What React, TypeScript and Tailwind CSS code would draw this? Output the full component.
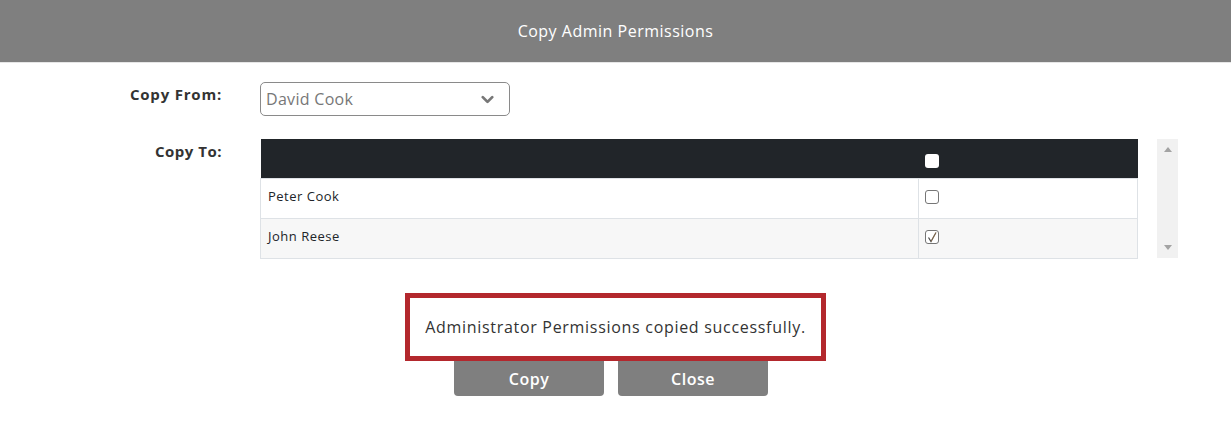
import React from 'react';
import { ChevronDown } from 'lucide-react';

const font = { fontFamily: '"Open Sans", "Liberation Sans", sans-serif' };

const users = [
    { name: 'Peter Cook', checked: false },
    { name: 'John Reese', checked: true },
];

const CheckBox: React.FC<{ checked: boolean }> = ({ checked }) => (
    <span className="relative inline-block w-[14px] h-[14px] rounded-[3px] border border-[#767676] bg-white">
        {checked && (
            <svg viewBox="0 0 14 14" className="absolute -left-px -top-px w-[14px] h-[14px]">
                <path d="M3.5 7.5 L6 11.5 L11 2.5" fill="none" stroke="#4a4a4a" strokeWidth="1.2" />
                <path d="M6 11.5 L11 2.5" fill="none" stroke="#d08a3a" strokeWidth="0.6" opacity="0.7" />
            </svg>
        )}
    </span>
);

const App: React.FC = () => {
    return (
        <div className="min-h-[434px] bg-white text-[#333]" style={font}>
            <header className="h-[63px] bg-[#7f7f7f] border-b border-[#e6e6e6] flex items-center justify-center">
                <h1 className="text-[16px] font-medium text-white tracking-[0.5px]">Copy Admin Permissions</h1>
            </header>

            <div className="pt-[19px]">
                <div className="flex items-start">
                    <label className="w-[222px] text-right text-[15px] font-bold text-[#333] pt-[1px] tracking-[0.8px]">Copy From:</label>
                    <div className="ml-[38px] w-[250px] h-[34px] rounded-[5px] border border-[#8a8a8a] flex items-center justify-between pl-[5px] pr-[12px]">
                        <span className="text-[16px] text-[#777] tracking-[0.3px]">David Cook</span>
                        <ChevronDown className="w-[19px] h-[19px] text-[#777]" strokeWidth={3.5} />
                    </div>
                </div>

                <div className="flex items-start mt-[23px]">
                    <label className="w-[222px] text-right text-[15px] font-bold text-[#333] pt-[1px] tracking-[0.5px]">Copy To:</label>
                    <div className="ml-[38px] flex items-start gap-[19px]">
                        <table className="w-[878px] border-collapse text-[13px] text-[#212529] tracking-[0.5px]">
                            <thead>
                                <tr className="bg-[#212529] h-[39px]">
                                    <th className="w-[658px]"></th>
                                    <th className="text-left pl-[6px] pt-[4px]">
                                        <span className="inline-block w-[14px] h-[14px] rounded-[3px] bg-white align-middle"></span>
                                    </th>
                                </tr>
                            </thead>
                            <tbody>
                                {users.map((u, i) => (
                                    <tr key={u.name} className={`h-[40px] ${i % 2 === 1 ? 'bg-[#f7f7f7]' : 'bg-white'}`}>
                                        <td className="border border-[#dee2e6] pl-[7px] pb-[2px]">{u.name}</td>
                                        <td className="border border-[#dee2e6] pl-[6px] pt-[4px]">
                                            <CheckBox checked={u.checked} />
                                        </td>
                                    </tr>
                                ))}
                            </tbody>
                        </table>
                        <div className="w-[21px] h-[119px] bg-[#f1f1f1] flex flex-col items-center justify-between py-[8px]">
                            <span className="w-0 h-0 border-x-[4px] border-x-transparent border-b-[5px] border-b-[#a3a3a3]"></span>
                            <span className="w-0 h-0 border-x-[4px] border-x-transparent border-t-[5px] border-t-[#a3a3a3]"></span>
                        </div>
                    </div>
                </div>

                <div className="relative mt-[34px] h-[103px]">
                    <div className="absolute left-[405px] top-0 w-[421px] h-[68px] border-[5px] border-[#b3282d] bg-white z-10 flex items-center justify-center">
                        <span className="text-[16px] text-[#333] tracking-[0.7px]">Administrator Permissions copied successfully.</span>
                    </div>
                    <div className="pt-[64px] flex justify-center gap-[14px] pr-[9px]">
                        <button className="w-[150px] h-[39px] bg-[#7f7f7f] rounded-[4px] text-white text-[16px] font-semibold pt-[6px] tracking-[0.5px]">Copy</button>
                        <button className="w-[150px] h-[39px] bg-[#7f7f7f] rounded-[4px] text-white text-[16px] font-semibold pt-[6px] tracking-[0.5px]">Close</button>
                    </div>
                </div>
            </div>
        </div>
    );
};

export default App;
